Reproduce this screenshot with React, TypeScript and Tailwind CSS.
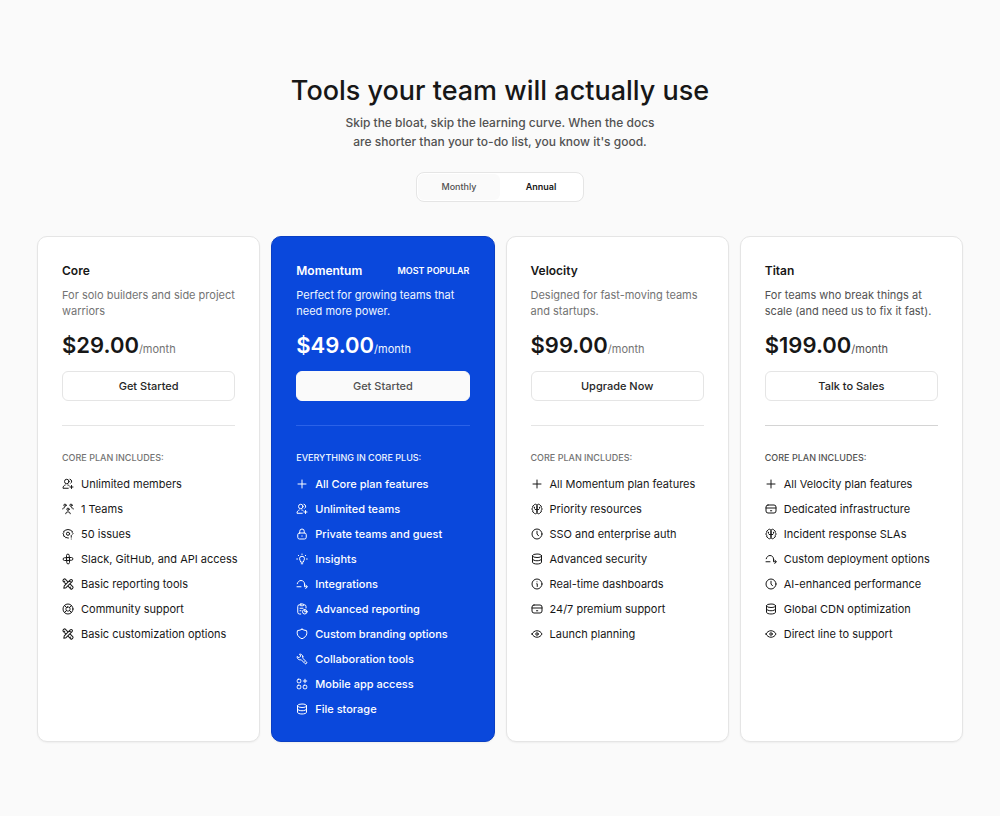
import { useState, type ReactNode } from "react";

type IconName =
  | "members"
  | "team"
  | "gear"
  | "integration"
  | "tools"
  | "lifebuoy"
  | "plus"
  | "lock"
  | "bulb"
  | "route"
  | "report"
  | "shield"
  | "wrench"
  | "apps"
  | "database"
  | "brain"
  | "clock"
  | "info"
  | "card"
  | "eye";

interface Plan {
  name: string;
  badge?: string;
  description: string;
  price: string;
  cta: string;
  listTitle: string;
  features: { icon: IconName; label: string }[];
  theme: "light" | "strong" | "featured";
}

const icons: Record<IconName, ReactNode> = {
  members: (
    <>
      <circle cx="9.5" cy="7" r="4.5" />
      <path d="M16 2.5a4.5 4.5 0 0 1 1.5 8" />
      <path d="M12.500 20.500H2c0-3.500 1.500-5.500 4.500-6.500M11.500 14c1.300.2 2.300.6 3 1.300" />
      <path d="M19 15v6M16 18h6" />
    </>
  ),
  team: (
    <>
      <circle cx="12" cy="12.5" r="2.3" />
      <circle cx="6" cy="4.5" r="2.3" />
      <circle cx="18" cy="4.5" r="2.3" />
      <path d="M7.5 21.5c0-2.500 1.800-3.700 4.500-3.700s4.500 1.200 4.500 3.700" />
      <path d="M1.500 12c0-1.800 1.500-2.700 3.500-2.700M22.500 12c0-1.800-1.500-2.700-3.500-2.700" />
    </>
  ),
  gear: (
    <>
      <path d="M21 12.5l1-1.5-1.500-2 .2-2.500-2.700-.8L16.500 3.500 14 4l-2-1.500L10 4l-2.500-.5L6 5.700l-2.700.8.2 2.500L2 11.500l1.500 2.300-.2 2.500 2.700.9 1.500 2.300 2.500-.5 2 1.500 1-.5" />
      <circle cx="12" cy="11.500" r="3.200" />
      <path d="M18.500 15v3.500M18.500 22h.01" />
    </>
  ),
  integration: (
    <>
      <path d="M14.500 10V5a2.750 2.750 0 0 0-5.500 0v9.500" />
      <path d="M14.500 10V5a2.750 2.750 0 0 0-5.500 0v9.500" transform="rotate(90 12 12)" />
      <path d="M14.500 10V5a2.750 2.750 0 0 0-5.500 0v9.500" transform="rotate(180 12 12)" />
      <path d="M14.500 10V5a2.750 2.750 0 0 0-5.500 0v9.500" transform="rotate(270 12 12)" />
    </>
  ),
  tools: (
    <>
      <path d="M9.500 3a2.500 2.500 0 0 1 5 0v17L12 24l-2.500-4zM9.500 5.500h5" transform="rotate(45 12 12)" />
      <path d="M9 8V1.500a2 2 0 0 1 2-2h2a2 2 0 0 1 2 2V8M9 16v6.500a2 2 0 0 0 2 2h2a2 2 0 0 0 2-2V16M9 3.500h2.500M9 20h2.500" transform="rotate(-45 12 12)" />
    </>
  ),
  lifebuoy: (
    <>
      <circle cx="12" cy="12" r="10" />
      <rect x="8" y="8" width="8" height="8" rx="3" />
      <path d="M9 9L5 5M15 9l4-4M9 15l-4 4M15 15l4 4" />
    </>
  ),
  plus: <path d="M12 4v16M4 12h16" />,
  lock: (
    <>
      <rect x="3.500" y="10" width="17" height="12" rx="3.500" />
      <path d="M7.500 10V6.500a4.500 4.500 0 0 1 9 0V10M12 15.500v1" />
    </>
  ),
  bulb: (
    <>
      <path d="M9.500 17.500c0-2-2.500-3-2.500-6a5 5 0 0 1 10 0c0 3-2.500 4-2.500 6zM10.500 21.500h3" />
      <path d="M12 2v1M1.500 12H3M21 12h1.500M4.500 4.500l1 1M19.500 4.500l-1 1" />
    </>
  ),
  route: (
    <>
      <path d="M2 17.500h8M2.500 11.500C3.500 7.500 6.500 5 10 5c4 0 7 3 7 7v5.500h5" />
      <path d="M19.500 14l3 3.500-3 3.500" />
    </>
  ),
  report: (
    <>
      <path d="M9.500 22H7a3.500 3.500 0 0 1-3.500-3.500V7A3.500 3.500 0 0 1 7 3.500h1M15.500 3.500h1A3.500 3.500 0 0 1 20 7v3" />
      <rect x="8" y="2" width="7.500" height="3.500" rx="1.700" />
      <path d="M8 10.500h6M8 15.500h2" />
      <circle cx="17.500" cy="17.500" r="4.500" />
      <path d="M17.500 13v4.500H22" />
    </>
  ),
  shield: (
    <path d="M12 2.500c-2.500 1.500-5.500 2.300-9 2.700-.7 2-.8 4-.5 6.500.7 4.500 4.500 7.800 9.500 9.800 5-2 8.800-5.300 9.500-9.800.3-2.500.2-4.500-.5-6.500-3.500-.4-6.500-1.200-9-2.700z" />
  ),
  wrench: (
    <>
      <path d="M13.500 6.500c.4 1.600.3 2.600-.2 3.800l7.900 7.700a2.300 2.300 0 0 1-3.200 3.200l-7.700-7.900c-1.200.5-2.200.6-3.800.2C3.500 12.500 2 10 2.300 7L6 9.500 9.500 6 7 2.300c3.200-.3 5.800 1.200 6.500 4.200z" />
      <path d="M17.500 17.500h.01" />
    </>
  ),
  apps: (
    <>
      <rect x="2.500" y="2.500" width="7" height="7" rx="2" />
      <rect x="2.500" y="14.500" width="7" height="7" rx="2" />
      <rect x="14.500" y="14.500" width="7" height="7" rx="2" />
      <path d="M18 2.500v7M14.500 6h7" />
    </>
  ),
  database: (
    <>
      <ellipse cx="12" cy="5.500" rx="9" ry="3.500" />
      <path d="M3 5.500v13C3 20.400 7 22 12 22s9-1.600 9-3.500v-13" />
      <path d="M3 12c0 1.900 4 3.500 9 3.500s9-1.600 9-3.500" />
    </>
  ),
  brain: (
    <>
      <path d="M12 4.500A3.200 3.200 0 0 0 6 4.500 3.500 3.500 0 0 0 3.500 9a3.800 3.800 0 0 0 0 6A3.500 3.500 0 0 0 6 19.500a3.200 3.200 0 0 0 6 0z" />
      <path d="M12 4.500a3.200 3.200 0 0 1 6 0A3.500 3.500 0 0 1 20.500 9a3.800 3.800 0 0 1 0 6 3.500 3.500 0 0 1-2.500 4.500 3.200 3.200 0 0 1-6 0z" />
      <path d="M7 8.500v2M17 8.500v2M8.500 13h7" />
    </>
  ),
  clock: (
    <>
      <circle cx="12" cy="12" r="10" />
      <path d="M12 6.500V12l3 3.500" />
    </>
  ),
  info: (
    <>
      <circle cx="12" cy="12" r="10" />
      <path d="M11.500 11.500h1V17M12 7.500h.01" />
    </>
  ),
  card: (
    <>
      <rect x="2" y="4" width="20" height="16" rx="4" />
      <path d="M2 10h20M11 15.500h2.500" />
    </>
  ),
  eye: (
    <>
      <path d="M2 12c2-4 5.500-6.500 10-6.500S20 8 22 12c-2 4-5.500 6.500-10 6.500S4 16 2 12z" />
      <circle cx="12" cy="12" r="2.500" />
    </>
  ),
};

const plans: Plan[] = [
  {
    name: "Core",
    description: "For solo builders and side project warriors",
    price: "$29.00",
    cta: "Get Started",
    listTitle: "CORE PLAN INCLUDES:",
    theme: "light",
    features: [
      { icon: "members", label: "Unlimited members" },
      { icon: "team", label: "1 Teams" },
      { icon: "gear", label: "50 issues" },
      { icon: "integration", label: "Slack, GitHub, and API access" },
      { icon: "tools", label: "Basic reporting tools" },
      { icon: "lifebuoy", label: "Community support" },
      { icon: "tools", label: "Basic customization options" },
    ],
  },
  {
    name: "Momentum",
    badge: "MOST POPULAR",
    description: "Perfect for growing teams that need more power.",
    price: "$49.00",
    cta: "Get Started",
    listTitle: "EVERYTHING IN CORE PLUS:",
    theme: "featured",
    features: [
      { icon: "plus", label: "All Core plan features" },
      { icon: "members", label: "Unlimited teams" },
      { icon: "lock", label: "Private teams and guest" },
      { icon: "bulb", label: "Insights" },
      { icon: "route", label: "Integrations" },
      { icon: "report", label: "Advanced reporting" },
      { icon: "shield", label: "Custom branding options" },
      { icon: "wrench", label: "Collaboration tools" },
      { icon: "apps", label: "Mobile app access" },
      { icon: "database", label: "File storage" },
    ],
  },
  {
    name: "Velocity",
    description: "Designed for fast-moving teams and startups.",
    price: "$99.00",
    cta: "Upgrade Now",
    listTitle: "CORE PLAN INCLUDES:",
    theme: "light",
    features: [
      { icon: "plus", label: "All Momentum plan features" },
      { icon: "brain", label: "Priority resources" },
      { icon: "clock", label: "SSO and enterprise auth" },
      { icon: "database", label: "Advanced security" },
      { icon: "info", label: "Real-time dashboards" },
      { icon: "card", label: "24/7 premium support" },
      { icon: "eye", label: "Launch planning" },
    ],
  },
  {
    name: "Titan",
    description: "For teams who break things at scale (and need us to fix it fast).",
    price: "$199.00",
    cta: "Talk to Sales",
    listTitle: "CORE PLAN INCLUDES:",
    theme: "strong",
    features: [
      { icon: "plus", label: "All Velocity plan features" },
      { icon: "card", label: "Dedicated infrastructure" },
      { icon: "brain", label: "Incident response SLAs" },
      { icon: "route", label: "Custom deployment options" },
      { icon: "clock", label: "AI-enhanced performance" },
      { icon: "database", label: "Global CDN optimization" },
      { icon: "eye", label: "Direct line to support" },
    ],
  },
];

const themes = {
  light: {
    card: "border-neutral-200 bg-white text-neutral-900",
    muted: "text-neutral-500",
    button: "border-neutral-200 bg-white text-neutral-800",
    rule: "border-neutral-200",
    list: "",
  },
  strong: {
    card: "border-neutral-200 bg-white text-neutral-900",
    muted: "text-neutral-600",
    button: "border-neutral-200 bg-white text-neutral-800",
    rule: "border-neutral-300",
    list: "",
  },
  featured: {
    card: "border-[#0a3fc4] bg-[#0a48dc] text-white",
    muted: "text-blue-50",
    button: "border-neutral-50 bg-neutral-50 text-neutral-600",
    rule: "border-[#2b62e8]",
    list: "font-medium",
  },
};

function Icon({ name }: { name: IconName }) {
  return (
    <svg
      viewBox="0 0 24 24"
      fill="none"
      stroke="currentColor"
      strokeWidth="2"
      strokeLinecap="round"
      strokeLinejoin="round"
      aria-hidden="true"
      className="size-3 shrink-0 overflow-visible"
    >
      {icons[name]}
    </svg>
  );
}

function PlanCard({ plan }: { plan: Plan }) {
  const theme = themes[plan.theme];

  return (
    <article className={`rounded-[10px] border p-6 shadow-xs ${theme.card}`}>
      <div className="flex items-center justify-between">
        <h2 className="text-[12px] leading-5 font-semibold">{plan.name}</h2>
        {plan.badge && <span className="text-[9px] leading-5 font-semibold">{plan.badge}</span>}
      </div>
      <p className={`mt-[6px] text-[11px] leading-4 ${theme.muted}`}>{plan.description}</p>
      <p className="mt-3 flex h-7 items-baseline text-[22px] leading-7 font-semibold">
        {plan.price}
        <span className={`text-[11px] font-normal ${theme.muted}`}>/month</span>
      </p>
      <button
        type="button"
        className={`mt-3 h-[30px] w-full cursor-pointer rounded-md border text-[11px] font-medium ${theme.button}`}
      >
        {plan.cta}
      </button>
      <hr className={`my-6 ${theme.rule}`} />
      <h3 className={`text-[9px] leading-4 font-medium ${theme.muted}`}>{plan.listTitle}</h3>
      <ul className={`mt-[10px] space-y-[9px] text-[11px] leading-4 ${theme.list}`}>
        {plan.features.map((feature) => (
          <li key={feature.label} className="flex items-center gap-[7px] whitespace-nowrap">
            <Icon name={feature.icon} />
            {feature.label}
          </li>
        ))}
      </ul>
    </article>
  );
}

export default function App() {
  const [billing, setBilling] = useState("Annual");

  return (
    <main className="min-h-screen bg-[#fafafa] px-[37px] py-[75px] font-['Inter',sans-serif]">
      <header className="flex flex-col items-center text-center">
        <h1 className="text-[27px] leading-8 font-medium text-neutral-900">
          Tools your team will actually use
        </h1>
        <p className="mt-[6px] max-w-[320px] text-[12px] leading-[19px] font-medium text-neutral-600">
          Skip the bloat, skip the learning curve. When the docs are shorter than your to-do list, you know it's good.
        </p>

        {/* Billing period */}
        <div className="mt-[21px] flex rounded-lg border border-neutral-200 bg-white p-px">
          {["Monthly", "Annual"].map((period) => (
            <button
              key={period}
              type="button"
              aria-pressed={billing === period}
              onClick={() => setBilling(period)}
              className={`h-[26px] w-[82px] cursor-pointer rounded-md text-[9px] ${
                billing === period
                  ? "bg-white font-semibold text-neutral-900"
                  : "bg-[#fafafa] font-medium text-neutral-600"
              }`}
            >
              {period}
            </button>
          ))}
        </div>
      </header>

      <section className="mt-[34px] grid grid-cols-2 gap-[11px] md:grid-cols-4">
        {plans.map((plan) => (
          <PlanCard key={plan.name} plan={plan} />
        ))}
      </section>
    </main>
  );
}
